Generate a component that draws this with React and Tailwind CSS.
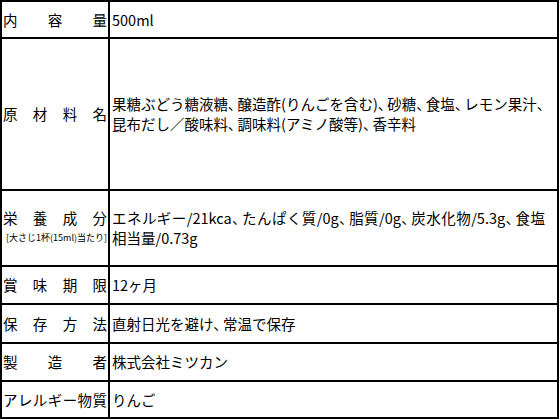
import React from "react";

const font = {
  fontFamily: '"Noto Sans CJK JP", "Noto Sans", sans-serif',
};

function Label({ text, sub }) {
  return (
    <div className="bg-white flex flex-col justify-center px-[1px]">
      <div className="flex justify-between text-[14.5px] leading-[20px] text-black">
        {text.split("").map((c, i) => (
          <span key={i}>{c}</span>
        ))}
      </div>
      {sub && (
        <div className="text-[9px] leading-[20px] whitespace-nowrap pl-[3px] text-black">
          {sub}
        </div>
      )}
    </div>
  );
}

function Line({ text, justify }) {
  const parts = text.split(/(、)/);
  return (
    <div
      className={
        justify
          ? "w-[433px] text-justify [text-align-last:justify] [text-justify:inter-character]"
          : ""
      }
    >
      {parts.map((p, i) =>
        p === "、" ? (
          <span key={i} className="[font-feature-settings:'palt'] pr-[2.25px]">
            、
          </span>
        ) : (
          <span key={i}>{p}</span>
        )
      )}
    </div>
  );
}

function Value({ lines, justify }) {
  return (
    <div className="bg-white flex flex-col justify-center pl-[2px] text-[14.5px] leading-[20px] text-black whitespace-nowrap">
      {lines.map((l, i) => (
        <Line key={i} text={l} justify={justify && i === 0} />
      ))}
    </div>
  );
}

export default function App() {
  return (
    <div className="w-[560px] h-[420px] bg-white" style={font}>
      <div className="w-[559px] grid grid-cols-[106px_447px] grid-rows-[35px_150px_74px_36px_37px_36px_35px] gap-[2px] p-[2px] bg-black">
        <Label text="内容量" />
        <Value lines={["500ml"]} />
        <Label text="原材料名" />
        <Value
          lines={[
            "果糖ぶどう糖液糖、醸造酢(りんごを含む)、砂糖、食塩、レモン果汁、",
            "昆布だし／酸味料、調味料(アミノ酸等)、香辛料",
          ]}
        />
        <Label text="栄養成分" sub="[大さじ1杯(15ml)当たり]" />
        <Value
          justify
          lines={[
            "エネルギー/21kca、たんぱく質/0g、脂質/0g、炭水化物/5.3g、食塩",
            "相当量/0.73g",
          ]}
        />
        <Label text="賞味期限" />
        <Value lines={["12ヶ月"]} />
        <Label text="保存方法" />
        <Value lines={["直射日光を避け、常温で保存"]} />
        <Label text="製造者" />
        <Value lines={["株式会社ミツカン"]} />
        <Label text="アレルギー物質" />
        <Value lines={["りんご"]} />
      </div>
    </div>
  );
}
